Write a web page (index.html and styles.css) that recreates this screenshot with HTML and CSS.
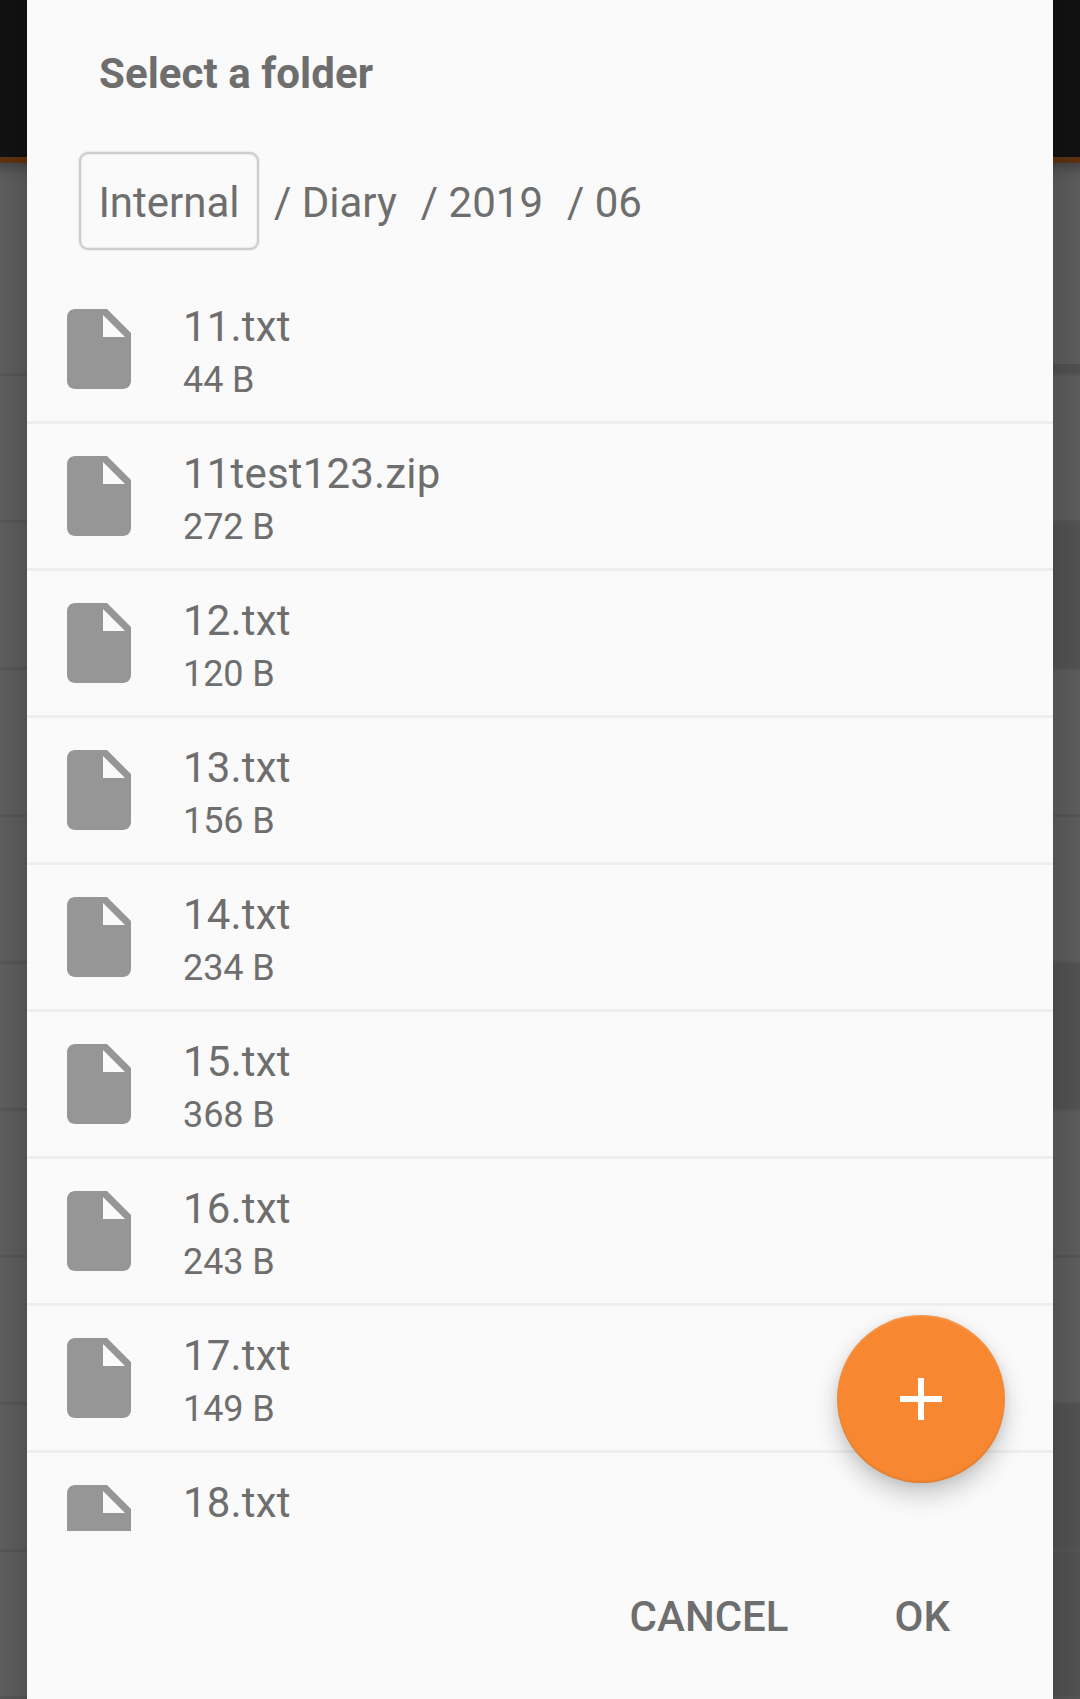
FILE: index.html
```
<!DOCTYPE html>
<html lang="en">
<head>
<meta charset="utf-8">
<title>Select a folder</title>
<link rel="stylesheet" href="styles.css">
</head>
<body>
<svg class="sprite" width="0" height="0" aria-hidden="true">
  <symbol id="file" viewBox="0 0 24 24"><path d="M6 2c-1.1 0-1.99.9-1.99 2L4 20c0 1.1.89 2 1.99 2H18c1.1 0 2-.9 2-2V8l-6-6H6zm7 7V3.5L18.5 9H13z"/></symbol>
</svg>
<div class="screen">
  <div class="strip left">
    <div class="bar"></div>
    <div class="row first"></div>
    <div class="row"></div><div class="row"></div><div class="row"></div><div class="row"></div>
    <div class="row"></div><div class="row"></div><div class="row"></div><div class="row"></div><div class="row"></div>
  </div>
  <main class="dialog">
    <h1 class="title">Select a folder</h1>
    <nav class="path">
      <span class="crumb root">Internal</span>
      <span class="crumb diary">/ Diary</span>
      <span class="crumb year">/ 2019</span>
      <span class="crumb">/ 06</span>
    </nav>
    <ul class="list">
      <li class="item"><svg class="icon"><use href="#file"/></svg><div class="info"><div class="name">11.txt</div><div class="size">44 B</div></div></li>
      <li class="item"><svg class="icon"><use href="#file"/></svg><div class="info"><div class="name">11test123.zip</div><div class="size">272 B</div></div></li>
      <li class="item"><svg class="icon"><use href="#file"/></svg><div class="info"><div class="name">12.txt</div><div class="size">120 B</div></div></li>
      <li class="item"><svg class="icon"><use href="#file"/></svg><div class="info"><div class="name">13.txt</div><div class="size">156 B</div></div></li>
      <li class="item"><svg class="icon"><use href="#file"/></svg><div class="info"><div class="name">14.txt</div><div class="size">234 B</div></div></li>
      <li class="item"><svg class="icon"><use href="#file"/></svg><div class="info"><div class="name">15.txt</div><div class="size">368 B</div></div></li>
      <li class="item"><svg class="icon"><use href="#file"/></svg><div class="info"><div class="name">16.txt</div><div class="size">243 B</div></div></li>
      <li class="item"><svg class="icon"><use href="#file"/></svg><div class="info"><div class="name">17.txt</div><div class="size">149 B</div></div></li>
      <li class="item"><svg class="icon"><use href="#file"/></svg><div class="info"><div class="name">18.txt</div></div></li>
    </ul>
    <div class="actions">
      <button class="action">CANCEL</button>
      <button class="action">OK</button>
    </div>
    <button class="fab" aria-label="New folder">
      <svg class="plus" viewBox="0 0 42 42"><path d="M18 0h6v18h18v6H24v18h-6V24H0v-6h18z"/></svg>
    </button>
  </main>
  <div class="strip right">
    <div class="bar"></div>
    <div class="row first edge"></div>
    <div class="row"></div><div class="row dark"></div><div class="row"></div><div class="row"></div>
    <div class="row dark"></div><div class="row"></div><div class="row"></div><div class="row dark"></div><div class="row dark"></div>
  </div>
</div>
</body>
</html>
```
FILE: styles.css
```
* { box-sizing: border-box; }
body { margin: 0; font-family: Roboto, "Liberation Sans", sans-serif; color: #6e6e6e; }
.sprite { display: block; }
.screen { display: grid; grid-template-columns: 27px 1026px 27px; height: 1699px; overflow: hidden; }

/* dimmed activity behind the dialog */
.strip { height: 1699px; overflow: hidden; background: #606060; position: relative; }
.strip::after { content: ""; position: absolute; inset: 0; }
.left::after { background: linear-gradient(to right, rgba(0,0,0,.03), rgba(0,0,0,.14)); }
.right::after { background: linear-gradient(to left, rgba(0,0,0,.05), rgba(0,0,0,.14)); }
.bar { height: 163px; background: #121212; border-bottom: 6px solid #613411; }
.row { height: 147px; border-bottom: 3px solid #595959; }
.first { height: 213px; background: linear-gradient(rgba(0,0,0,.24), rgba(0,0,0,.06) 10px, rgba(0,0,0,0) 20px); }
.edge { box-shadow: inset 0 -9px #545454; }
.dark { background: #555; }

.dialog { position: relative; display: flex; flex-direction: column; height: 1699px; background: #fafafa; }
.title { margin: 0; padding: 49px 72px 0; height: 152px; font-size: 42px; line-height: 50px; font-weight: 700; letter-spacing: .05px; }
.path { display: flex; align-items: center; height: 125px; padding: 0 0 27px 52px; font-size: 42px; line-height: 50px; }
.crumb { white-space: pre; padding-top: 3px; }
.root { display: flex; align-items: center; justify-content: center; width: 180px; height: 98px; margin-right: 15px; border: 2px solid #cdcdcd; border-radius: 9px; box-shadow: 0 0 2px #ccc, inset 0 0 2px #ccc; }
.diary { margin-right: 24px; }
.year { margin-right: 24px; }

.list { margin: 0; padding: 0; height: 1254px; overflow: hidden; list-style: none; }
.item { display: flex; height: 147px; padding: 24px 24px 0; border-bottom: 3px solid #eee; }
.icon { width: 96px; height: 96px; margin-right: 36px; fill: #969696; }
.name { padding-top: 1px; font-size: 42px; line-height: 50px; letter-spacing: .18px; }
.size { padding-top: 3px; font-size: 36px; line-height: 50px; letter-spacing: -.1px; }

.actions { display: flex; justify-content: flex-end; gap: 106px; padding: 61px 103px 0 0; }
.action { border: 0; padding: 0; background: none; color: inherit; font: 500 42px/50px Roboto, sans-serif; }

.fab { position: absolute; left: 810px; top: 1315px; width: 168px; height: 168px; display: flex; align-items: center; justify-content: center; padding: 0; border: 0; border-radius: 50%; background: #f78831; box-shadow: 0 12px 24px rgba(0,0,0,.2), 0 2px 10px rgba(0,0,0,.08), inset 0 -2px 2px rgba(0,0,0,.08), inset 0 2px 2px rgba(255,255,255,.1); }
.plus { width: 42px; height: 42px; fill: #fff; }
```
